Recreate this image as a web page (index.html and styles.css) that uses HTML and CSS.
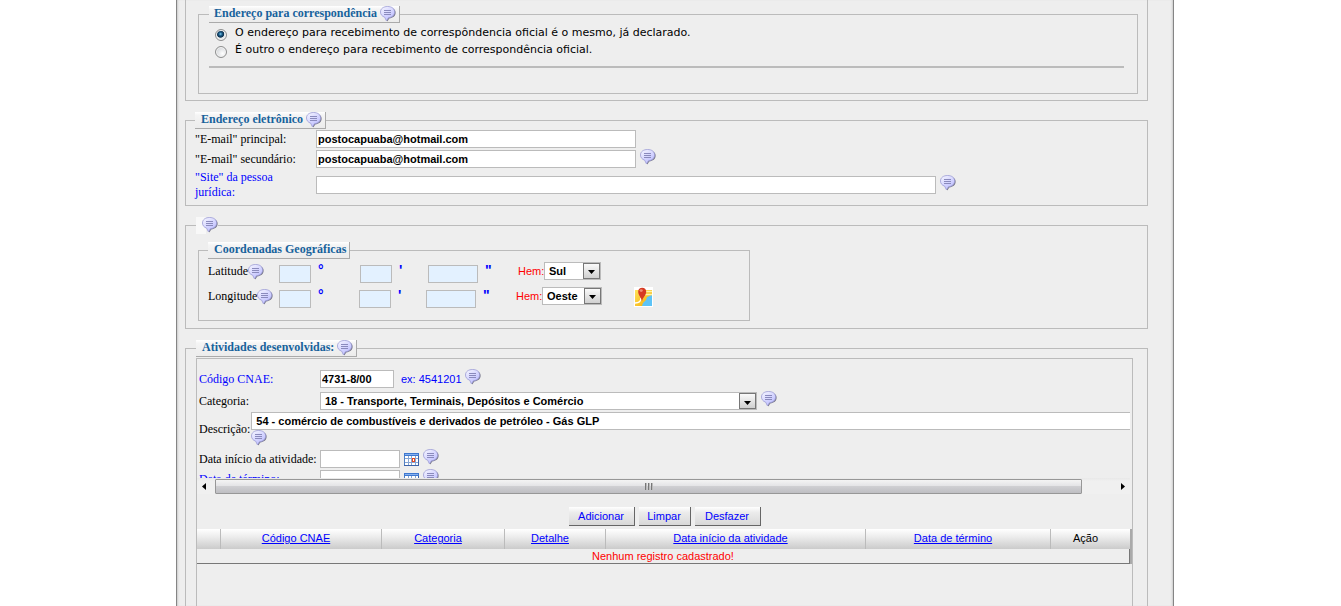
FILE: index.html
```html
<!DOCTYPE html>
<html lang="pt-BR">
<head>
<meta charset="utf-8">
<title>Cadastro da pessoa jurídica</title>
<link rel="stylesheet" href="styles.css">
</head>
<body>
<svg class="defs" aria-hidden="true">
  <defs>
    <linearGradient id="bubbleFill" x1="0" y1="0" x2="0.7" y2="1">
      <stop offset="0" stop-color="#f8f8ff"/>
      <stop offset="0.5" stop-color="#d9d9ff"/>
      <stop offset="1" stop-color="#bcbcff"/>
    </linearGradient>
    <linearGradient id="mapLand" x1="0" y1="0" x2="1" y2="1">
      <stop offset="0" stop-color="#ffe45c"/>
      <stop offset="1" stop-color="#f5a800"/>
    </linearGradient>
    <symbol id="bubble" viewBox="0 0 16 16">
      <path d="M9 1.600c4 0 6.600 2.200 6.600 5.200 0 3.400-2.800 5.300-6.400 5.600L7.400 15.600 6 12" fill="#66667a" opacity=".9"/>
      <path d="M7.600.500C11.800.500 14.600 2.600 14.600 6c0 3.300-2.600 5.400-6 5.700L6.400 14.800 4.700 11.200C2 10.300.500 8.400.500 6 .500 2.600 3.400.500 7.600.500z" fill="url(#bubbleFill)" stroke="#9a9ad4" stroke-width=".8"/>
      <path d="M4 4.500h7M4 6.500h7M4 8.500h7" stroke="#8a8abc" stroke-width="1" fill="none"/>
    </symbol>
    <symbol id="calendar" viewBox="0 0 15 13">
      <rect x=".5" y=".5" width="14" height="12" fill="#fff" stroke="#4f7fc4"/>
      <rect x="0" y="0" width="15" height="3" fill="#3e78d0"/>
      <rect x="1" y="1" width="13" height="1" fill="#86b0ee"/>
      <path d="M4.500 3v10M7.500 3v10M11.500 3v10M1 5.500h13M1 9.500h13" stroke="#86a5d3" fill="none"/>
      <rect x="8.500" y="5.500" width="2" height="3" fill="#fff" stroke="#e8481c"/>
      <path d="M0 12.500h15M14.500 3v10" stroke="#3c62a8" fill="none"/>
    </symbol>
    <symbol id="map" viewBox="0 0 19 20">
      <rect width="19" height="20" fill="#fff"/>
      <path d="M1 3h17v16H1z" fill="url(#mapLand)"/>
      <path d="M18 8l-5 2-1 3-3 3-1 3h10z" fill="#5cc3f7"/>
      <path d="M10 4.500h8M11 7.500h7" stroke="#fff3a8" stroke-width="1.500"/>
      <path d="M1 16c3 0 6-1 6-5" stroke="#fff" stroke-width="1.400" fill="none"/>
      <path d="M8 14.500C7.600 10.500 4.200 8.500 4.200 4.700 4.200 2.300 5.900.700 8.200.700s4 1.600 4 4c0 3.800-3.700 5.800-4.200 9.800z" fill="#d63a22"/>
      <ellipse cx="7.200" cy="3.600" rx="1.600" ry="1.300" fill="#f08a72"/>
    </symbol>
    <symbol id="down" viewBox="0 0 7 4"><path d="M0 0h7L3.500 4z"/></symbol>
  </defs>
</svg>

<main class="page">
  <fieldset class="group group-open">
    <fieldset class="group inner correspondence">
      <legend>Endereço para correspondência <svg class="bubble"><use href="#bubble"/></svg></legend>
      <label class="choice"><input type="radio" name="corr" checked><span>O endereço para recebimento de correspôndencia oficial é o mesmo, já declarado.</span></label>
      <label class="choice"><input type="radio" name="corr"><span>É outro o endereço para recebimento de correspondência oficial.</span></label>
      <hr>
    </fieldset>
  </fieldset>

  <fieldset class="group online">
    <legend>Endereço eletrônico <svg class="bubble"><use href="#bubble"/></svg></legend>
    <div class="row">
      <label for="mail1">"E-mail" principal:</label>
      <input id="mail1" class="field mail" type="text" value="postocapuaba@hotmail.com">
    </div>
    <div class="row">
      <label for="mail2">"E-mail" secundário:</label>
      <input id="mail2" class="field mail" type="text" value="postocapuaba@hotmail.com">
      <svg class="bubble"><use href="#bubble"/></svg>
    </div>
    <div class="row">
      <label for="site" class="optional">"Site" da pessoa<br>jurídica:</label>
      <input id="site" class="field site" type="text">
      <svg class="bubble"><use href="#bubble"/></svg>
    </div>
  </fieldset>

  <fieldset class="group location">
    <legend class="icon-only"><svg class="bubble"><use href="#bubble"/></svg></legend>
    <fieldset class="group inner coords">
      <legend>Coordenadas Geográficas</legend>
      <div class="coord latitude">
        <span class="name">Latitude<svg class="bubble"><use href="#bubble"/></svg></span>
        <label class="unit"><input class="field deg" type="text" aria-label="Latitude, graus"><b>°</b></label>
        <label class="unit"><input class="field deg" type="text" aria-label="Latitude, minutos"><b>'</b></label>
        <label class="unit"><input class="field sec" type="text" aria-label="Latitude, segundos"><b>"</b></label>
        <label class="hem" for="hemLat">Hem:</label>
        <span class="select hem-lat"><select id="hemLat"><option>Sul</option><option>Norte</option></select><span class="arrow"><svg><use href="#down"/></svg></span></span>
      </div>
      <div class="coord longitude">
        <span class="name">Longitude<svg class="bubble"><use href="#bubble"/></svg></span>
        <label class="unit"><input class="field deg" type="text" aria-label="Longitude, graus"><b>°</b></label>
        <label class="unit"><input class="field deg" type="text" aria-label="Longitude, minutos"><b>'</b></label>
        <label class="unit"><input class="field sec" type="text" aria-label="Longitude, segundos"><b>"</b></label>
        <label class="hem" for="hemLon">Hem:</label>
        <span class="select hem-lon"><select id="hemLon"><option>Oeste</option><option>Leste</option></select><span class="arrow"><svg><use href="#down"/></svg></span></span>
        <button class="map" type="button" aria-label="Mapa"><svg><use href="#map"/></svg></button>
      </div>
    </fieldset>
  </fieldset>

  <fieldset class="group activities">
    <legend>Atividades desenvolvidas: <svg class="bubble"><use href="#bubble"/></svg></legend>
    <div class="box">
      <div class="viewport">
        <div class="row">
          <label for="cnae" class="optional">Código CNAE:</label>
          <input id="cnae" class="field cnae" type="text" value="4731-8/00">
          <span class="hint">ex: 4541201</span>
          <svg class="bubble"><use href="#bubble"/></svg>
        </div>
        <div class="row">
          <label for="cat">Categoria:</label>
          <span class="select cat"><select id="cat"><option>18 - Transporte, Terminais, Depósitos e Comércio</option></select><span class="arrow"><svg><use href="#down"/></svg></span></span>
          <svg class="bubble"><use href="#bubble"/></svg>
        </div>
        <div class="row description">
          <label for="desc">Descrição:</label>
          <div class="wide">
            <select id="desc" class="field"><option>54 - comércio de combustíveis e derivados de petróleo - Gás GLP</option></select>
            <svg class="bubble"><use href="#bubble"/></svg>
          </div>
        </div>
        <div class="row">
          <label for="start">Data início da atividade:</label>
          <input id="start" class="field date" type="text">
          <svg class="calendar"><use href="#calendar"/></svg>
          <svg class="bubble"><use href="#bubble"/></svg>
        </div>
        <div class="row">
          <label for="end" class="optional">Data de término:</label>
          <input id="end" class="field date" type="text">
          <svg class="calendar"><use href="#calendar"/></svg>
          <svg class="bubble"><use href="#bubble"/></svg>
        </div>
      </div>
      <div class="scrollbar">
        <svg class="tip" viewBox="0 0 4 7"><path d="M4 0v7L0 3.500z"/></svg>
        <div class="track"><div class="thumb"><i></i><i></i><i></i></div></div>
        <svg class="tip" viewBox="0 0 4 7"><path d="M0 0v7L4 3.500z"/></svg>
      </div>
      <div class="actions">
        <button type="button" class="wide-btn">Adicionar</button>
        <button type="button">Limpar</button>
        <button type="button" class="wide-btn">Desfazer</button>
      </div>
      <table>
        <colgroup><col class="c1"><col class="c2"><col class="c3"><col class="c4"><col class="c5"><col class="c6"><col></colgroup>
        <thead>
          <tr><th></th><th><a href="#">Código CNAE</a></th><th><a href="#">Categoria</a></th><th><a href="#">Detalhe</a></th><th><a href="#">Data início da atividade</a></th><th><a href="#">Data de término</a></th><th>Ação</th></tr>
        </thead>
        <tbody><tr><td colspan="7">Nenhum registro cadastrado!</td></tr></tbody>
      </table>
    </div>
  </fieldset>
</main>
</body>
</html>
```
FILE: styles.css
```css
* { box-sizing: border-box; }

html { height: 100%; }

body {
  height: 100%;
  margin: 0;
  padding-left: 9px;
  background: #fff;
  color: #000;
  font: 12px/15px "Liberation Serif", "Times New Roman", serif;
}

.defs { position: absolute; width: 0; height: 0; }

.page {
  max-width: 998px;
  min-height: 100%;
  margin: 0 auto;
  padding: 0 25px 0 8px;
  background: #eee;
  border: solid #858585;
  border-width: 0 1px;
  box-shadow: inset 2px 0 2px -1px #ccc, inset -2px 0 2px -1px #ccc;
}

.group {
  min-width: 0;
  margin: 0 0 11px;
  padding: 0 10px;
  border: 1px solid #bbb;
}

legend {
  display: flex;
  align-items: center;
  gap: 3px;
  height: 17px;
  padding: 0 3px 1px 6px;
  border: solid #aaa;
  border-width: 0 1px 1px 0;
  background: linear-gradient(#fff, #f4f4f4 20%, #ececec);
  color: #17629c;
  font-weight: bold;
}

.icon-only {
  padding-right: 0;
  border-width: 0;
  background: linear-gradient(90deg, #f8f8f8 10px, #eee 10px);
}

.bubble { flex: none; width: 16px; height: 16px; }

.group-open { padding: 6px 9px 6px 12px; border-top: 0; }
.inner { margin: 0; }
.correspondence { padding: 1px 13px 25px 10px; }
.correspondence legend { padding-left: 5px; }

.choice {
  display: flex;
  align-items: center;
  gap: 8px;
  height: 17px;
  padding-left: 6px;
  font: 11px/17px "DejaVu Sans", Verdana, sans-serif;
}

.choice input {
  appearance: none;
  width: 12px;
  height: 12px;
  margin: 5px 0 0;
  border: 1px solid #8e8f8f;
  border-radius: 50%;
  background: radial-gradient(circle at 65% 65%, #fff, #c4c8cc);
  box-shadow: inset 0 0 0 1px #f4f4f4;
}

.choice input:checked {
  background: radial-gradient(circle at 45% 40%, #7fd0f5 0, #1c5c88 20%, #0b2f4c 40%, #e4e8ea 50%);
}

hr { height: 2px; margin: 8px 0 0; border: 0; background: #bbb; }

.row { display: flex; align-items: center; gap: 4px; min-height: 20px; }
.row > label { flex: none; width: 117px; white-space: nowrap; }
.row .bubble { align-self: flex-start; }
.optional { color: #00f; }

.field {
  height: 18px;
  margin: 0;
  padding: 0 1px;
  border: 1px solid #bbb;
  border-radius: 0;
  background: #fff;
  color: #000;
  font: bold 11px/14px "Liberation Sans", Arial, sans-serif;
}

.online { padding: 0 10px 5px 9px; }
.online .row:last-child { min-height: 31px; }
.online .row:last-child .bubble { margin-top: 6px; }
.mail { width: 320px; }
.site { width: 620px; }

.location { padding: 0 12px 7px; }
.location > .icon-only { margin-left: -2px; }
.coords { max-width: 552px; margin-top: 8px; padding: 0 10px 11px 9px; }
.coords legend { gap: 0; }

.coord { display: grid; align-items: center; height: 25px; }
.latitude { grid-template-columns: 71px 81px 68px 90px 26px 90px; }
.longitude { grid-template-columns: 71px 80px 67px 90px 26px 92px 20px; }
.name { display: flex; align-items: center; }

.unit { display: flex; align-items: flex-end; gap: 7px; height: 25px; padding-bottom: 1px; }
.unit b {
  align-self: flex-start;
  margin-top: 3px;
  color: #00f;
  font: bold 14px/16px "Liberation Sans", Arial, sans-serif;
}
.unit .field { background: #e3f1ff; }
.deg { width: 32px; }
.sec { width: 50px; }

.hem { color: #f00; font: 11px/15px "Liberation Sans", Arial, sans-serif; }

.select {
  position: relative;
  display: block;
  height: 18px;
  border: 1px solid #bbb;
  background: #fff;
}

.coord .select { margin-bottom: 2px; }

.select select {
  appearance: none;
  display: block;
  width: 100%;
  height: 16px;
  margin: 0;
  padding: 0 18px 0 4px;
  border: 0;
  border-radius: 0;
  background: none;
  color: #000;
  font: bold 11px/16px "Liberation Sans", Arial, sans-serif;
}

.arrow {
  position: absolute;
  top: 0;
  right: 0;
  display: flex;
  align-items: center;
  justify-content: center;
  width: 17px;
  height: 16px;
  border: 1px solid #777;
  background: linear-gradient(#fafafa, #d0d0d0);
  pointer-events: none;
}
.arrow svg { width: 7px; height: 4px; margin-top: 3px; }

.hem-lat { width: 57px; }
.hem-lon { width: 60px; }
.cat { width: 437px; }

.map { width: 19px; height: 20px; padding: 0; border: 0; background: none; }
.map svg { display: block; width: 19px; height: 20px; }

.activities { margin: 0; border-bottom: 0; }

.box {
  width: 100%;
  max-width: 937px;
  min-height: 248px;
  margin-top: 1px;
  border: 1px solid #bbb;
  border-bottom: 0;
}

.viewport {
  height: 119px;
  margin-right: 2px;
  padding: 10px 0 0 2px;
  overflow: hidden;
}
.viewport .row + .row { margin-top: 2px; }
.cnae { width: 74px; }
.hint {
  margin: 0 -1px 0 3px;
  color: #00f;
  font: 11px/15px "Liberation Sans", Arial, sans-serif;
}
.date { width: 80px; }
.calendar { flex: none; width: 15px; height: 13px; }

.viewport .row + .description { gap: 1px; margin-top: 1px; }
.description > label { width: auto; }
.wide { flex: 1; }
.wide .field {
  appearance: none;
  display: block;
  width: 100%;
  padding: 0 4px;
  border-right: 0;
}
.wide .bubble { display: block; }
.viewport .description + .row { margin-top: 3px; }
.viewport .row:last-child { margin-top: 0; }

.scrollbar {
  display: flex;
  align-items: center;
  justify-content: space-between;
  height: 16px;
  margin-right: 2px;
  padding: 0 5px;
  background: linear-gradient(#e8e8e8, #f0f0f0 20%);
}
.tip { width: 4px; height: 7px; }
.track { flex: 1; padding: 0 39px 0 9px; }
.thumb {
  display: flex;
  align-items: center;
  justify-content: center;
  gap: 1px;
  height: 15px;
  border: 1px solid #979797;
  border-radius: 1px;
  background: linear-gradient(#f4f4f4, #e4e4e6 45%, #cfcfd2 50%, #bebec2);
}
.thumb i { width: 2px; height: 7px; background: linear-gradient(90deg, #555, #ddd); }

.actions { display: flex; justify-content: center; gap: 4px; padding: 13px 0 3px; }
.actions button {
  width: 52px;
  height: 19px;
  padding: 0;
  border: solid #666;
  border-width: 0 1px 1px 0;
  background: linear-gradient(#fff, #ececec 30%, #d8d8d8);
  color: #00f;
  font: 11px/16px "Liberation Sans", Arial, sans-serif;
}
.actions .wide-btn { width: 66px; }

table {
  width: 100%;
  table-layout: fixed;
  border-collapse: separate;
  border-spacing: 0;
  border-right: 2px solid #aaa;
  font: 11px/14px "Liberation Sans", Arial, sans-serif;
}
.c1 { width: 24px; }
.c2 { width: 161px; }
.c3 { width: 123px; }
.c4 { width: 101px; }
.c5 { width: 260px; }
.c6 { width: 185px; }

th {
  height: 20px;
  padding: 0 10px 2px 0;
  background: linear-gradient(#fff, #ececec 40%, #cbcbcb);
  border-right: 1px solid #bbb;
  font-weight: normal;
}
th:last-child { border-right: 0; }
th a { color: #00f; text-decoration: underline; }

td {
  height: 15px;
  padding: 0;
  line-height: 13px;
  border: solid #777;
  border-width: 0 1px 1px 0;
  color: #f00;
  text-align: center;
}
```
